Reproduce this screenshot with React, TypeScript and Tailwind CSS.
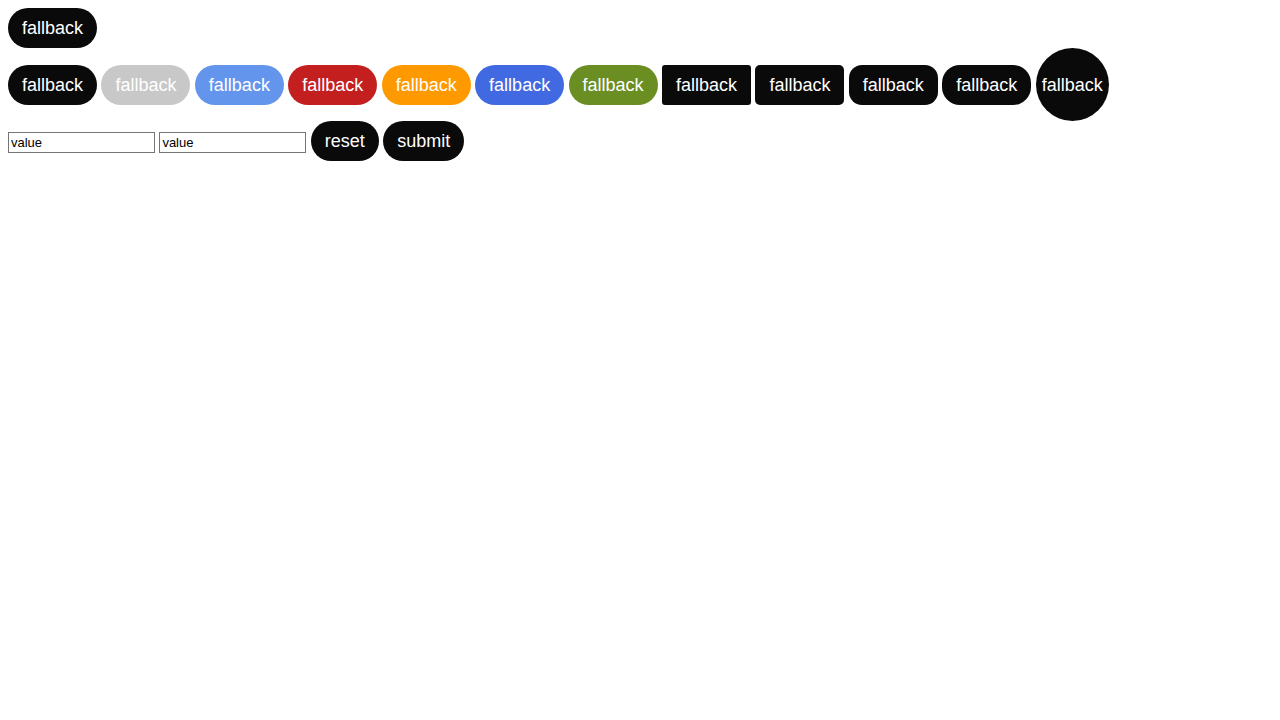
import React from "react";

const base =
  "h-10 px-[14px] flex items-center justify-center text-[18px] leading-none text-white shrink-0";

const Btn = ({ label = "fallback", className = "" }: { label?: string; className?: string }) => (
  <button className={`${base} ${className}`}>{label}</button>
);

export default function App() {
  return (
    <div className="p-2 font-['Liberation_Sans',Arial,sans-serif] bg-white min-h-screen">
      <div className="flex">
        <Btn className="bg-[#0a0a0a] rounded-full" />
      </div>
      <div className="flex items-center gap-[4.4px]">
        <Btn className="bg-[#0a0a0a] rounded-full" />
        <Btn className="bg-[#c8c8c8] rounded-full text-[#efefef]" />
        <Btn className="bg-[#6495ed] rounded-full" />
        <Btn className="bg-[#c41f1f] rounded-full" />
        <Btn className="bg-[#ff9900] rounded-full" />
        <Btn className="bg-[#4169e1] rounded-full" />
        <Btn className="bg-[#6b8e23] rounded-full" />
        <Btn className="bg-[#0a0a0a] rounded-[3px]" />
        <Btn className="bg-[#0a0a0a] rounded-[5px]" />
        <Btn className="bg-[#0a0a0a] rounded-[13px]" />
        <Btn className="bg-[#0a0a0a] rounded-[18px]" />
        <button className="w-[73px] h-[73px] rounded-full bg-[#0a0a0a] text-white text-[18px] leading-none flex items-center justify-center shrink-0">
          fallback
        </button>
      </div>
      <div className="flex items-center gap-[4.4px]">
        <input
          defaultValue="value"
          className="w-[147px] h-[21px] border border-[#767676] px-[2px] text-[13px] text-black mt-[2px]"
        />
        <input
          defaultValue="value"
          className="w-[147px] h-[21px] border border-[#767676] px-[2px] text-[13px] text-black mt-[2px]"
        />
        <Btn label="reset" className="bg-[#0a0a0a] rounded-full" />
        <Btn label="submit" className="bg-[#0a0a0a] rounded-full" />
      </div>
    </div>
  );
}
